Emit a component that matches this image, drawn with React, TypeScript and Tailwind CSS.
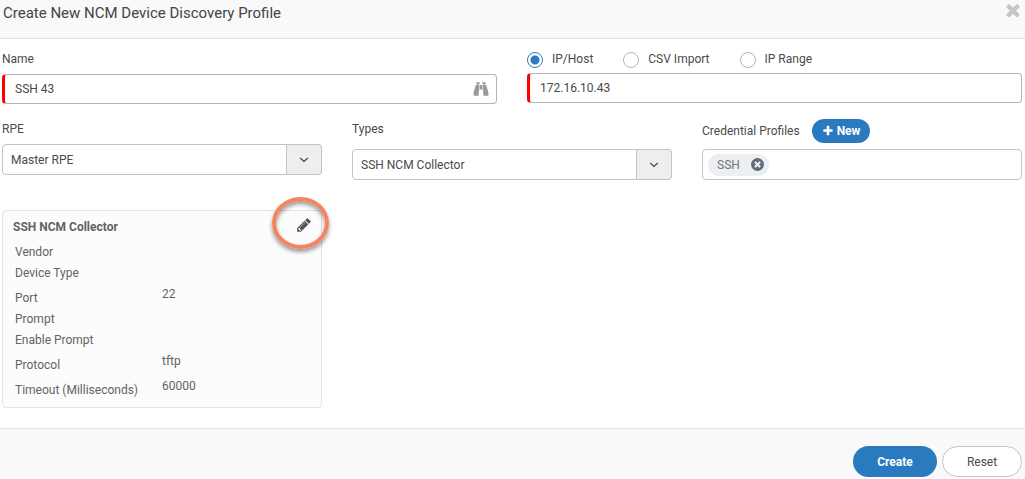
import { useState } from "react";
import type { ReactNode } from "react";

const glyphs = {
  times:
    "M1490 1322q0 40-28 68l-136 136q-28 28-68 28t-68-28l-294-294-294 294q-28 28-68 28t-68-28l-136-136q-28-28-28-68t28-68l294-294-294-294q-28-28-28-68t28-68l136-136q28-28 68-28t68 28l294 294 294-294q28-28 68-28t68 28l136 136q28 28 28 68t-28 68l-294 294 294 294q28 28 28 68z",
  plus:
    "M1600 736v192q0 40-28 68t-68 28h-416v416q0 40-28 68t-68 28h-192q-40 0-68-28t-28-68v-416h-416q-40 0-68-28t-28-68v-192q0-40 28-68t68-28h416v-416q0-40 28-68t68-28h192q40 0 68 28t28 68v416h416q40 0 68 28t28 68z",
  pencil:
    "M491 1536l91-91-235-235-91 91v107h128v128h107zm523-928q0-22-22-22-10 0-17 7l-542 542q-7 7-7 17 0 22 22 22 10 0 17-7l542-542q7-7 7-17zm-54-192l416 416-832 832h-416v-416zm683 96q0 53-37 90l-166 166-416-416 166-165q36-38 90-38 53 0 91 38l235 234q37 39 37 91z",
  timesCircle:
    "M1277 1122q0-26-19-45l-181-181 181-181q19-19 19-45 0-27-19-46l-90-90q-19-19-46-19-26 0-45 19l-181 181-181-181q-19-19-45-19-27 0-46 19l-90 90q-19 19-19 46 0 26 19 45l181 181-181 181q-19 19-19 45 0 27 19 46l90 90q19 19 46 19 26 0 45-19l181-181 181 181q19 19 45 19 27 0 46-19l90-90q19-19 19-46zm387-226q0 209-103 385.5t-279.5 279.5-385.5 103-385.5-103-279.5-279.5-103-385.5 103-385.5 279.5-279.5 385.5-103 385.5 103 279.5 279.5 103 385.5z",
  binoculars:
    "M704 448v576q0 26-19 45t-45 19v512q0 26-19 45t-45 19h-448q-26 0-45-19t-19-45v-320l249-809q7-23 31-23h360zM1024 448v512h-256v-512h256zM1728 1280v320q0 26-19 45t-45 19h-448q-26 0-45-19t-19-45v-512q-26 0-45-19t-19-45v-576h360q24 0 31 23zM736 160v224h-352v-224q0-32 32-32h288q32 0 32 32zM1408 160v224h-352v-224q0-32 32-32h288q32 0 32 32z",
};

function Glyph({ name, className }: { name: keyof typeof glyphs; className: string }) {
  return (
    <svg viewBox="0 0 1792 1792" fill="currentColor" aria-hidden="true" className={className}>
      <path d={glyphs[name]} />
    </svg>
  );
}

function SelectField({ id, label, gap, options }: { id: string; label: string; gap: string; options: string[] }) {
  return (
    <div className={`flex flex-col ${gap}`}>
      <label htmlFor={id}>{label}</label>
      <div className="relative flex">
        <select
          id={id}
          className="h-[31px] w-full appearance-none rounded border border-[#c4c4c4] bg-white pr-10 pl-2 outline-none"
        >
          {options.map((o) => (
            <option key={o}>{o}</option>
          ))}
        </select>
        <span className="pointer-events-none absolute inset-y-0 right-0 flex w-9 items-center justify-center rounded-r border border-[#c4c4c4] bg-[#eeeeee]">
          <svg viewBox="0 0 10 10" className="size-[10px]" fill="none" stroke="#444" strokeWidth="1.2" aria-hidden="true">
            <path d="M1.2 3 5 6.4 8.8 3" />
          </svg>
        </span>
      </div>
    </div>
  );
}

function RadioOption({ value, current, onPick }: { value: string; current: string; onPick: (v: string) => void }) {
  return (
    <label className="flex items-start gap-[9px]">
      <input
        type="radio"
        name="source"
        checked={current === value}
        onChange={() => onPick(value)}
        className="mt-px size-4 appearance-none rounded-full border border-[#b5b5b5] bg-white checked:border-[#2a7abf] checked:bg-[radial-gradient(circle,#2a7abf_4px,#fff_5px)]"
      />
      {value}
    </label>
  );
}

function DetailRow({ label, children }: { label: string; children?: ReactNode }) {
  return (
    <div className={`grid grid-cols-[147px_1fr] leading-[21px] ${children ? "min-h-[25px]" : "min-h-[21px]"}`}>
      <dt className="self-end">{label}</dt>
      <dd className="self-start">{children}</dd>
    </div>
  );
}

export default function App() {
  const [source, setSource] = useState("IP/Host");
  return (
    <form
      onSubmit={(e) => e.preventDefault()}
      className="flex min-h-screen flex-col bg-white font-['Roboto',sans-serif] text-xs leading-4 text-[#4a4a4a]"
    >
      <header className="flex h-[39px] items-start justify-between border-b border-[#e2e2e2] bg-[#f9f9f9] pr-[2px] pl-[3px]">
        <h1 className="pt-[3px] text-[15px] leading-5 text-[#444444]">Create New NCM Device Discovery Profile</h1>
        <button type="button" aria-label="Close" className="text-[#c6c6c6]">
          <Glyph name="times" className="size-5" />
        </button>
      </header>

      <main className="flex-1 pt-3 pr-[3px] pb-5 pl-[2px]">
        <div className="grid grid-cols-2 gap-[30px]">
          <div className="flex flex-col gap-[7px]">
            <label htmlFor="name">Name</label>
            <div className="flex h-[30px] items-center rounded border border-l-[3px] border-[#b5b5b5] border-l-[#ff0000] pr-[7px]">
              <input id="name" defaultValue="SSH 43" className="min-w-0 flex-1 pl-[10px] outline-none" />
              <Glyph name="binoculars" className="size-4 text-[#999999]" />
            </div>
          </div>
          <div className="flex flex-col gap-[5px]">
            <div className="flex gap-[30px]">
              {["IP/Host", "CSV Import", "IP Range"].map((v) => (
                <RadioOption key={v} value={v} current={source} onPick={setSource} />
              ))}
            </div>
            <input
              aria-label="IP/Host address"
              defaultValue="172.16.10.43"
              className="h-[30px] w-full rounded border border-l-[3px] border-[#b5b5b5] border-l-[#ff0000] pl-[10px] outline-none"
            />
          </div>
        </div>

        <div className="mt-[15px] grid grid-cols-3 items-start gap-[30px]">
          <div className="pt-[2px]">
            <SelectField id="rpe" label="RPE" gap="gap-[7px]" options={["Master RPE"]} />
          </div>
          <div className="pt-[2px]">
            <SelectField id="types" label="Types" gap="gap-3" options={["SSH NCM Collector"]} />
          </div>
          <div className="flex flex-col gap-[6px]">
            <div className="flex items-center gap-3">
              <label htmlFor="credentials">Credential Profiles</label>
              <button
                type="button"
                className="flex h-6 items-center gap-[3px] rounded-full bg-[#2a7abf] px-[10px] font-bold text-white"
              >
                <Glyph name="plus" className="size-3" />
                New
              </button>
            </div>
            <div className="flex h-[31px] items-center rounded border border-[#c4c4c4] px-[5px]">
              <span className="flex h-[22px] items-center gap-[10px] rounded-full bg-[#ebeff2] pr-1 pl-[9px] text-[#6b7480]">
                SSH
                <button type="button" aria-label="Remove SSH" className="text-[#626d7a]">
                  <Glyph name="timesCircle" className="size-[15px]" />
                </button>
              </span>
              <input id="credentials" className="min-w-0 flex-1 pl-2 outline-none" />
            </div>
          </div>
        </div>

        <div className="mt-[30px] grid grid-cols-3 gap-[30px]">
          <section className="relative rounded border border-[#e3e3e3] bg-[#fcfcfc] pt-1 pr-[9px] pb-[6px] pl-[10px] text-[#636363]">
            <div className="mb-[3px] flex h-6 items-center justify-between">
              <h2 className="font-bold">SSH NCM Collector</h2>
              <button type="button" aria-label="Edit collector" className="pb-1 text-[#555555]">
                <Glyph name="pencil" className="size-4" />
              </button>
            </div>
            <dl className="pl-[2px]">
              <DetailRow label="Vendor" />
              <DetailRow label="Device Type" />
              <DetailRow label="Port">22</DetailRow>
              <DetailRow label="Prompt" />
              <DetailRow label="Enable Prompt" />
              <DetailRow label="Protocol">tftp</DetailRow>
              <DetailRow label="Timeout (Milliseconds)">60000</DetailRow>
            </dl>
            <span className="pointer-events-none absolute -top-[14px] -right-2 h-[52px] w-[57px] rounded-[50%] border-4 border-[#f4845f] shadow-[0_3px_4px_rgba(0,0,0,0.4),inset_0_3px_4px_rgba(0,0,0,0.4)]" />
          </section>
        </div>
      </main>

      <footer className="flex h-[51px] items-start justify-end gap-[5px] border-t border-[#e2e2e2] bg-[#f9f9f9] pt-[17px] pr-[3px]">
        <button type="submit" className="h-[31px] w-[84px] rounded-full bg-[#2a7abf] font-bold text-white">
          Create
        </button>
        <button type="reset" className="h-[31px] w-20 rounded-full border border-[#c4c4c4] bg-white">
          Reset
        </button>
      </footer>
    </form>
  );
}
